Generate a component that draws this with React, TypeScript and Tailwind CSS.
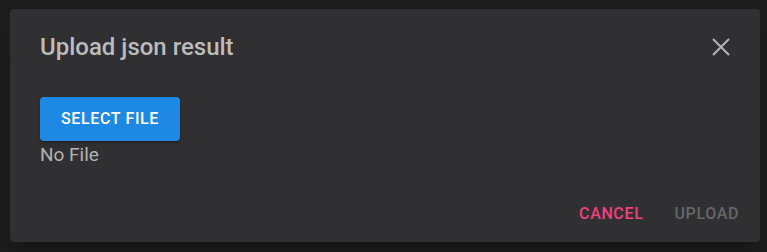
export default function App() {
  return (
    <div className="h-[252px] w-[767px] bg-[#1e1e1e] pl-[10px] pt-[9px] font-['Roboto',sans-serif]">
      <div className="flex h-[233px] w-[750px] flex-col rounded-[4px] bg-[#303032] px-[30px] shadow-[0_11px_15px_-7px_rgba(0,0,0,0.2),0_24px_38px_3px_rgba(0,0,0,0.14)]">
        <div className="flex h-8 items-center justify-between mt-[22px]">
          <h1 className="text-[24px] font-medium leading-8 text-[#bcbcbc]">Upload json result</h1>
          <button type="button" aria-label="Close" className="flex h-[18px] w-[18px] items-center justify-center text-[#b5b5b5]">
            <svg width="18" height="18" viewBox="0 0 18 18" fill="none" stroke="currentColor" strokeWidth="2">
              <path d="M1 1L17 17M17 1L1 17" />
            </svg>
          </button>
        </div>
        <div className="mt-[34px]">
          <button
            type="button"
            className="h-[44px] w-[140px] rounded-[4px] bg-[#1e88e5] text-[16px] font-medium uppercase tracking-[0.04em] text-white shadow-[0_3px_1px_-2px_rgba(0,0,0,0.2),0_2px_2px_0_rgba(0,0,0,0.14),0_1px_5px_0_rgba(0,0,0,0.12)]"
          >
            Select file
          </button>
          <p className="mt-[2px] text-[19px] leading-6 text-[#b3b3b3]">No File</p>
        </div>
        <div className="mt-auto mb-[18px] -mr-[9px] flex justify-end gap-[31px]">
          <button type="button" className="text-[16px] font-medium uppercase leading-5 tracking-[0.04em] text-[#f0407e]">
            Cancel
          </button>
          <button type="button" disabled className="text-[16px] font-medium uppercase leading-5 tracking-[0.04em] text-[#666668]">
            Upload
          </button>
        </div>
      </div>
    </div>
  );
}
